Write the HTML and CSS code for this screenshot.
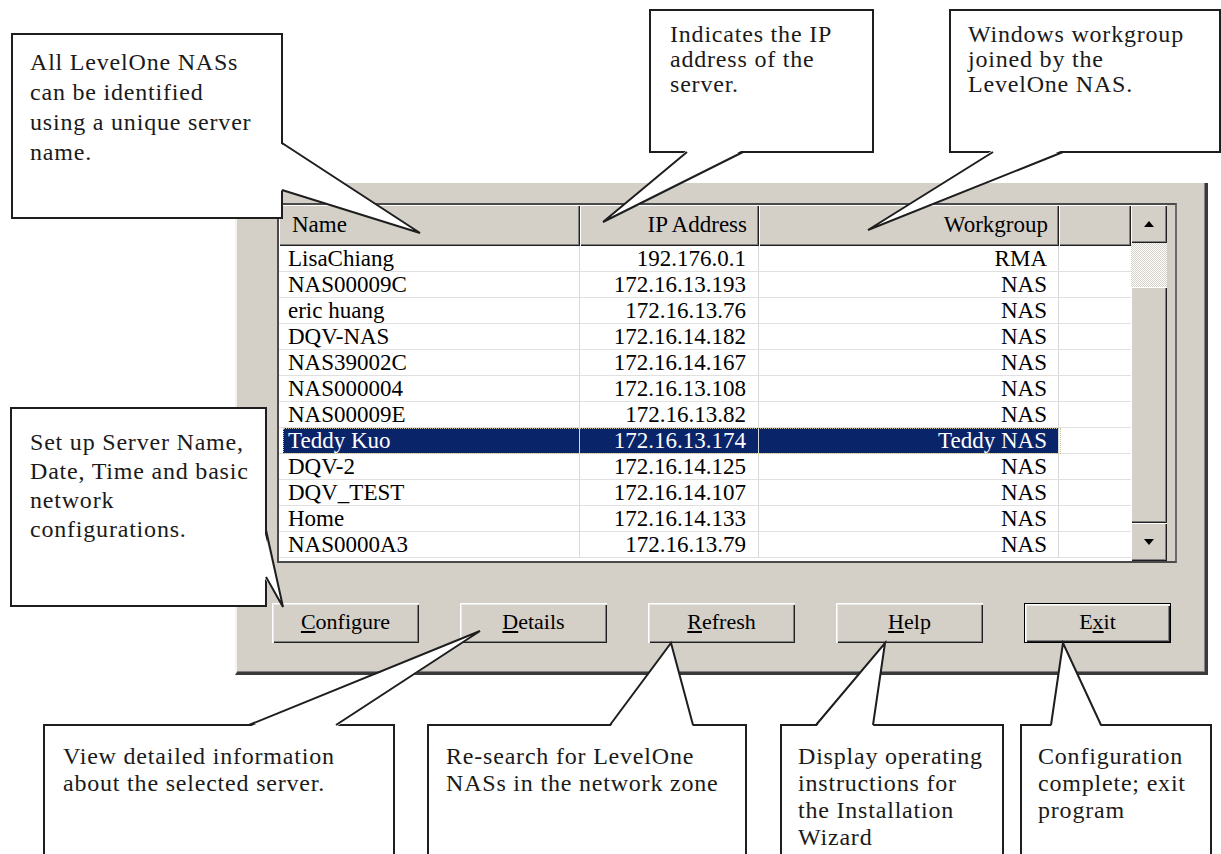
FILE: index.html
```html
<!DOCTYPE html>
<html>
<head>
    <title>LevelOne NAS Installation Wizard</title>
    <link rel="stylesheet" href="styles.css">
</head>
<body>
<div class="stage">

    <div class="dialog">
        <div class="grid">
            <div class="table">
                <div class="head">
                    <div class="hcell c-name">Name</div>
                    <div class="hcell c-ip">IP Address</div>
                    <div class="hcell c-wg">Workgroup</div>
                    <div class="hcell c-pad"></div>
                </div>
                <div class="row"><div class="cell c-name">LisaChiang</div><div class="cell c-ip">192.176.0.1</div><div class="cell c-wg">RMA</div><div class="cell c-pad"></div></div>
                <div class="row"><div class="cell c-name">NAS00009C</div><div class="cell c-ip">172.16.13.193</div><div class="cell c-wg">NAS</div><div class="cell c-pad"></div></div>
                <div class="row"><div class="cell c-name">eric huang</div><div class="cell c-ip">172.16.13.76</div><div class="cell c-wg">NAS</div><div class="cell c-pad"></div></div>
                <div class="row"><div class="cell c-name">DQV-NAS</div><div class="cell c-ip">172.16.14.182</div><div class="cell c-wg">NAS</div><div class="cell c-pad"></div></div>
                <div class="row"><div class="cell c-name">NAS39002C</div><div class="cell c-ip">172.16.14.167</div><div class="cell c-wg">NAS</div><div class="cell c-pad"></div></div>
                <div class="row"><div class="cell c-name">NAS000004</div><div class="cell c-ip">172.16.13.108</div><div class="cell c-wg">NAS</div><div class="cell c-pad"></div></div>
                <div class="row"><div class="cell c-name">NAS00009E</div><div class="cell c-ip">172.16.13.82</div><div class="cell c-wg">NAS</div><div class="cell c-pad"></div></div>
                <div class="row selected"><div class="cell c-name">Teddy Kuo</div><div class="cell c-ip">172.16.13.174</div><div class="cell c-wg">Teddy NAS</div><div class="cell c-pad"></div></div>
                <div class="row"><div class="cell c-name">DQV-2</div><div class="cell c-ip">172.16.14.125</div><div class="cell c-wg">NAS</div><div class="cell c-pad"></div></div>
                <div class="row"><div class="cell c-name">DQV_TEST</div><div class="cell c-ip">172.16.14.107</div><div class="cell c-wg">NAS</div><div class="cell c-pad"></div></div>
                <div class="row"><div class="cell c-name">Home</div><div class="cell c-ip">172.16.14.133</div><div class="cell c-wg">NAS</div><div class="cell c-pad"></div></div>
                <div class="row"><div class="cell c-name">NAS0000A3</div><div class="cell c-ip">172.16.13.79</div><div class="cell c-wg">NAS</div><div class="cell c-pad"></div></div>
            </div>
            <div class="scroll">
                <div class="sbtn up"></div>
                <div class="track"></div>
                <div class="thumb"></div>
                <div class="sbtn down"></div>
            </div>
        </div>

        <div class="buttons">
            <div class="btn"><u>C</u>onfigure</div>
            <div class="btn"><u>D</u>etails</div>
            <div class="btn"><u>R</u>efresh</div>
            <div class="btn"><u>H</u>elp</div>
            <div class="btn default">E<u>x</u>it</div>
        </div>
    </div>

    <!-- callouts -->
    <div class="note note-name">All LevelOne NASs<br>can be identified<br>using a unique server<br>name.</div>
    <div class="note note-ip">Indicates the IP<br>address of the<br>server.</div>
    <div class="note note-wg">Windows workgroup<br>joined by the<br>LevelOne NAS.</div>
    <div class="note note-config">Set up Server Name,<br>Date, Time and basic<br>network<br>configurations.</div>
    <div class="note bottom note-details">View detailed information<br>about the selected server.</div>
    <div class="note bottom note-refresh">Re-search for LevelOne<br>NASs in the network zone</div>
    <div class="note bottom note-help">Display operating<br>instructions for<br>the Installation<br>Wizard</div>
    <div class="note bottom note-exit">Configuration<br>complete; exit<br>program</div>

    <svg class="pointers" width="1221" height="854" viewBox="0 0 1221 854">
        <g class="wedge">
            <polygon points="280,143 420,233 280,190"/>
            <polygon points="687,150 603,222 743,150"/>
            <polygon points="993,150 868,230 1063,150"/>
            <polygon points="264,530 283,607 264,577"/>
            <polygon points="249,727 480,631 336,727"/>
            <polygon points="610,727 671,643 693,727"/>
            <polygon points="816,727 885,643 873,727"/>
            <polygon points="1051,727 1063,643 1101,727"/>
        </g>
        <g class="edge">
            <polyline points="282,143 420,233 282,190"/>
            <polyline points="687,152 603,222 743,152"/>
            <polyline points="993,152 868,230 1063,152"/>
            <polyline points="266,530 283,607 266,577"/>
            <polyline points="249,725 480,631 336,725"/>
            <polyline points="610,725 671,643 693,725"/>
            <polyline points="816,725 885,643 873,725"/>
            <polyline points="1051,725 1063,643 1101,725"/>
        </g>
    </svg>
</div>
</body>
</html>
```

FILE: styles.css
```css
body {
    margin: 0;
    background-color: #fff;
    font-family: "Liberation Serif", "Times New Roman", serif;
    color: #111;
}

.stage {
    position: relative;
    display: flow-root;
    width: 1221px;
    height: 854px;
    overflow: hidden;
}

/* the dialog window */
.dialog {
    box-sizing: border-box;
    width: 973px;
    margin: 183px 0 0 235px;
    padding: 20px 0 29px;
    background-color: #d4d0c8;
    border-left: 2px solid #f4f3ef;
    border-right: 3px solid #3a3a3a;
    border-bottom: 3px solid #3a3a3a;
    box-shadow: inset -1px -1px #808080;
}

.grid {
    box-sizing: border-box;
    display: flex;
    width: 900px;
    height: 360px;
    margin-left: 40px;
    border: 2px solid #4a4a4a;
    border-right-color: #6a6a6a;
    background-color: #d4d0c8;
}

.table {
    width: 852px;
    background-color: #fff;
    font-size: 23px;
    color: #000;
}

.head,
.row {
    display: grid;
    grid-template-columns: 301px 179px 300px 72px;
}

.head {
    height: 41px;
    background-color: #d4d0c8;
}

.hcell {
    box-sizing: border-box;
    padding: 6px 11px 0;
    line-height: 28px;
    box-shadow: inset 1px 1px #fff, inset -1px -1px #202020, inset -2px -2px #808080;
}

.hcell.c-name {
    padding-left: 13px;
}

.row {
    box-sizing: border-box;
    height: 26px;
    border-bottom: 1px solid #e0e0e0;
}

.cell {
    padding: 0 11px 0 9px;
    line-height: 25px;
    white-space: nowrap;
    border-right: 1px solid #d8d8d8;
}

.c-ip,
.c-wg {
    text-align: right;
}

.c-ip {
    padding-right: 12px;
}

.cell.c-pad {
    border-right: none;
}

.row.selected {
    position: relative;
}

.row.selected .c-name,
.row.selected .c-ip,
.row.selected .c-wg {
    background-color: #0a246a;
    color: #fff;
}

.row.selected .c-name {
    background: linear-gradient(to right, #fff 4px, #0a246a 4px);
}

.row.selected::after {
    content: '';
    position: absolute;
    left: 4px;
    top: 0;
    width: 776px;
    height: 24px;
    border: 1px dotted #c9c39a;
}

/* scrollbar */
.scroll {
    display: flex;
    flex-direction: column;
    width: 36px;
    margin-right: 8px;
}

.sbtn,
.thumb {
    box-sizing: border-box;
    background-color: #d4d0c8;
    box-shadow: inset 1px 1px #fff, inset -1px -1px #202020, inset -2px -2px #808080;
}

.sbtn {
    position: relative;
    height: 38px;
}

.sbtn::after {
    content: '';
    position: absolute;
    left: 13px;
    top: 16px;
    border-left: 5px solid transparent;
    border-right: 5px solid transparent;
}

.sbtn.up::after {
    border-bottom: 6px solid #000;
}

.sbtn.down::after {
    border-top: 6px solid #000;
}

.track {
    height: 44px;
    background: repeating-conic-gradient(#fff 0 25%, #d4d0c8 0 50%) 0 0 / 2px 2px;
}

.thumb {
    flex: 1;
}

/* buttons */
.buttons {
    display: flex;
    gap: 41px;
    margin-top: 40px;
    padding-left: 35px;
}

.btn {
    box-sizing: border-box;
    width: 147px;
    height: 40px;
    line-height: 38px;
    text-align: center;
    font-size: 22px;
    color: #000;
    background-color: #d4d0c8;
    box-shadow: inset 1px 1px #fff, inset 2px 2px #eceae4, inset -1px -1px #202020, inset -2px -2px #808080;
}

.btn.default {
    border: 1px solid #000;
    line-height: 36px;
}

/* callout boxes */
.note {
    position: absolute;
    box-sizing: border-box;
    background-color: #fff;
    border: 2px solid #1e1e1e;
    font-size: 24px;
    letter-spacing: 0.8px;
    white-space: nowrap;
    color: #1a1a1a;
}

.note-name {
    left: 11px;
    top: 33px;
    width: 272px;
    height: 186px;
    padding: 12px 0 0 17px;
    line-height: 30px;
}

.note-ip {
    left: 649px;
    top: 9px;
    width: 225px;
    height: 144px;
    padding: 11px 0 0 19px;
    line-height: 25px;
}

.note-wg {
    left: 949px;
    top: 9px;
    width: 272px;
    height: 144px;
    padding: 11px 0 0 17px;
    line-height: 25px;
}

.note-config {
    left: 10px;
    top: 407px;
    width: 257px;
    height: 200px;
    padding: 19px 0 0 18px;
    line-height: 29px;
}

.note.bottom {
    top: 724px;
    height: 150px;
    padding-top: 17px;
    line-height: 27px;
}

.note-details {
    left: 43px;
    width: 352px;
    padding-left: 18px;
}

.note-refresh {
    left: 427px;
    width: 320px;
    padding-left: 17px;
}

.note-help {
    left: 780px;
    width: 224px;
    padding-left: 16px;
}

.note-exit {
    left: 1020px;
    width: 192px;
    padding-left: 16px;
}

/* pointer wedges drawn over everything */
.pointers {
    position: absolute;
    left: 0;
    top: 0;
}

.wedge polygon {
    fill: #fff;
}

.edge polyline {
    fill: none;
    stroke: #1e1e1e;
    stroke-width: 2;
}
```
